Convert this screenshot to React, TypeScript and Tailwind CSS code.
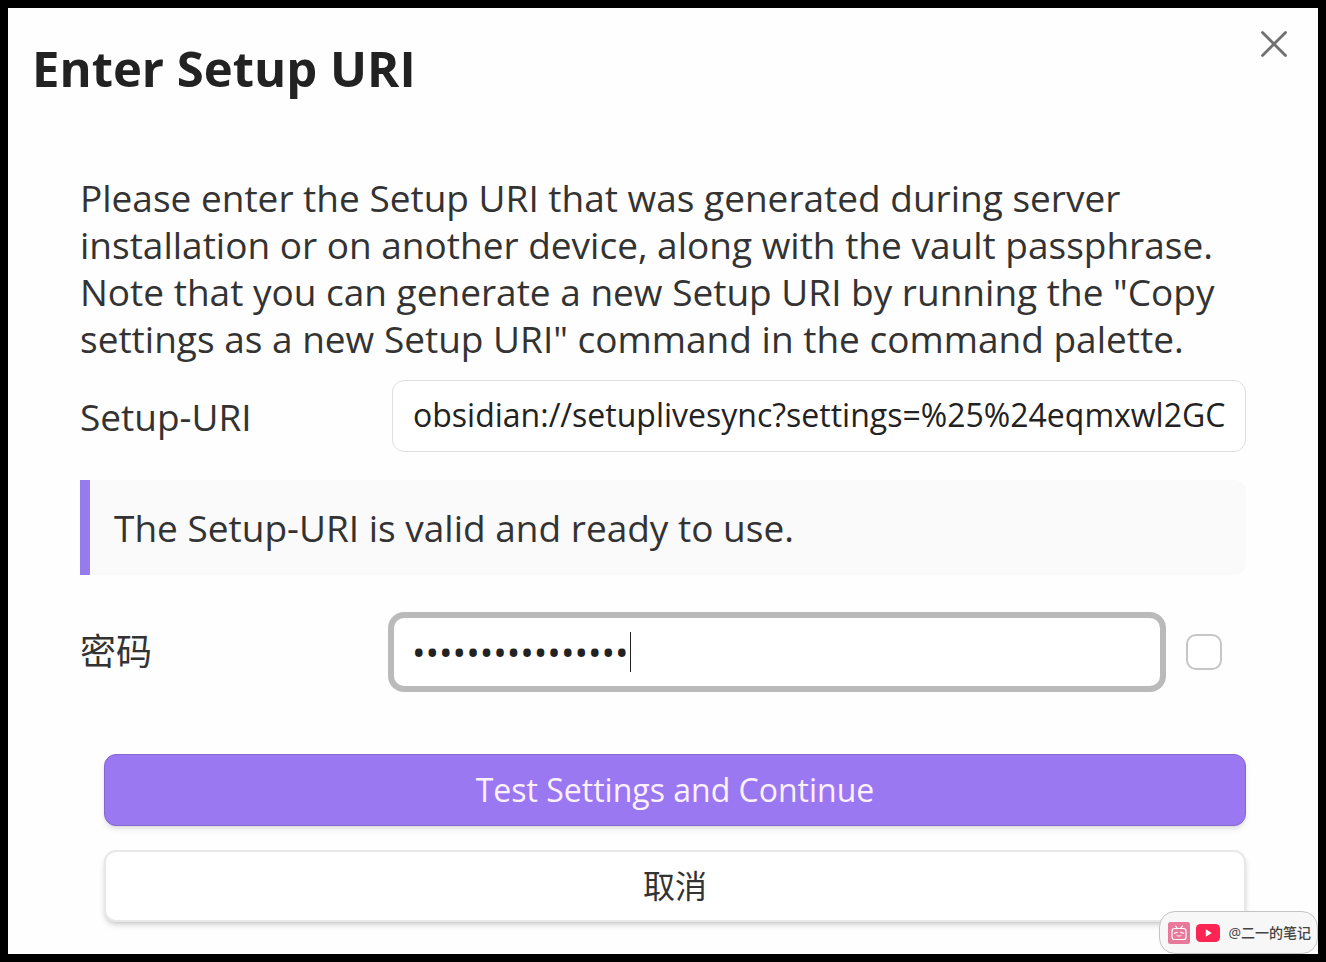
import { useState } from "react";

const SETUP_URI =
  "obsidian://setuplivesync?settings=%25%24eqmxwl2GC8vT1hNf";

function CloseIcon() {
  return (
    <svg
      viewBox="0 0 28 28"
      className="size-7"
      fill="none"
      stroke="currentColor"
      strokeWidth="2.8"
      strokeLinecap="round"
      aria-hidden="true"
    >
      <path d="M2.5 2.5 25.5 25.5M25.5 2.5 2.5 25.5" />
    </svg>
  );
}

function TvIcon() {
  return (
    <svg viewBox="0 0 22 22" className="size-[22px]" aria-hidden="true">
      <rect width="22" height="22" rx="2.5" fill="#e8799b" />
      <g
        fill="none"
        stroke="#fff"
        strokeWidth="1.2"
        strokeLinecap="round"
        strokeLinejoin="round"
      >
        <rect x="4" y="6.5" width="14" height="11" rx="2.6" />
        <path d="M7.6 4.2 9.4 6.3M14.4 4.2 12.6 6.3" />
        <path d="M6.4 11.3 9.2 10.4M15.6 11.3 12.8 10.4" />
        <path d="M9 13.6c.4.9 1.6.9 2 0 .4.9 1.6.9 2 0" strokeWidth="1" />
      </g>
    </svg>
  );
}

function PlayIcon() {
  return (
    <svg viewBox="0 0 24 18" className="h-[18px] w-6" aria-hidden="true">
      <rect width="24" height="18" rx="4.5" fill="#fb2452" />
      <path d="M9.8 5.3v7.4l6-3.7z" fill="#fff" />
    </svg>
  );
}

export default function App() {
  const [uri, setUri] = useState(SETUP_URI);
  const [passphrase, setPassphrase] = useState("correcthorsebatt");
  const [visible, setVisible] = useState(false);

  return (
    <div className="flex min-h-screen bg-black p-2 font-['Open_Sans','Noto_Sans_CJK_SC',sans-serif] text-[#333333]">
      <main
        role="dialog"
        aria-labelledby="dialog-title"
        className="relative min-w-0 flex-1 bg-[#fefefe] px-6 pt-[22px] pb-8"
      >
        <header className="flex items-start justify-between">
          <h1
            id="dialog-title"
            className="text-[49px] leading-[76px] font-bold text-[#222222]"
          >
            Enter Setup URI
          </h1>
          <button
            type="button"
            aria-label="Close"
            className="mr-1.5 flex text-[#707070]"
          >
            <CloseIcon />
          </button>
        </header>

        <form
          className="px-12 pt-[68px]"
          onSubmit={(event) => event.preventDefault()}
        >
          <p className="text-[37px] leading-[47px]">
            Please enter the Setup URI that was generated during server
            installation or on another device, along with the vault passphrase.
            Note that you can generate a new Setup URI by running the "Copy
            settings as a new Setup URI" command in the command palette.
          </p>

          <div className="mt-[18px] flex items-center">
            <label htmlFor="setup-uri" className="w-[312px] shrink-0 text-[37px] leading-[47px]">
              Setup-URI
            </label>
            <input
              id="setup-uri"
              type="text"
              value={uri}
              onChange={(event) => setUri(event.target.value)}
              className="h-[72px] min-w-0 flex-1 rounded-xl border border-[#dfdfdf] bg-white px-5 pb-1 text-[32px] text-[#222222] outline-none"
            />
          </div>

          <p className="mt-7 rounded-r-xl border-l-10 border-[#967bec] bg-[#fafafa] px-6 py-6 text-[37px] leading-[47px]">
            The Setup-URI is valid and ready to use.
          </p>

          <div className="mt-[41px] flex items-center">
            <label htmlFor="passphrase" className="w-[312px] shrink-0 text-[36px]">
              密码
            </label>
            <div className="relative flex min-w-0 flex-1">
              <input
                id="passphrase"
                type={visible ? "text" : "password"}
                value={passphrase}
                onChange={(event) => setPassphrase(event.target.value)}
                className="h-[72px] min-w-0 flex-1 rounded-xl border-2 border-[#bababa] bg-white px-[18px] text-[36px] text-[#222222] ring-4 ring-[#bababa] outline-none"
              />
              <span className="absolute top-4 left-[238px] h-10 w-px bg-[#222222]" />
            </div>
            <input
              type="checkbox"
              aria-label="Show passphrase"
              checked={visible}
              onChange={(event) => setVisible(event.target.checked)}
              className="mr-6 ml-6 size-9 shrink-0 appearance-none rounded-[10px] border-2 border-[#c6c6c6] bg-white checked:bg-[#9a78f2]"
            />
          </div>

          <div className="mt-[66px] flex flex-col gap-6 pl-6">
            <button
              type="submit"
              className="h-[72px] rounded-xl border border-[#8368d0] bg-[#9a78f2] text-[32px] font-medium text-[#fdf0ff] shadow-md shadow-black/10"
            >
              Test Settings and Continue
            </button>
            <button
              type="button"
              className="h-[72px] rounded-xl border-2 border-[#e8e8e8] bg-white text-[32px] shadow-md shadow-black/15"
            >
              取消
            </button>
          </div>
        </form>

        <div className="absolute right-0 bottom-0 flex h-[43px] items-center gap-1.5 rounded-2xl border border-[#c4c4c4] bg-[#f7f7f7] pr-1.5 pl-2 text-[14px] font-medium whitespace-nowrap text-[#444444]">
          <TvIcon />
          <PlayIcon />
          <span className="ml-0.5">@二一的笔记</span>
        </div>
      </main>
    </div>
  );
}
